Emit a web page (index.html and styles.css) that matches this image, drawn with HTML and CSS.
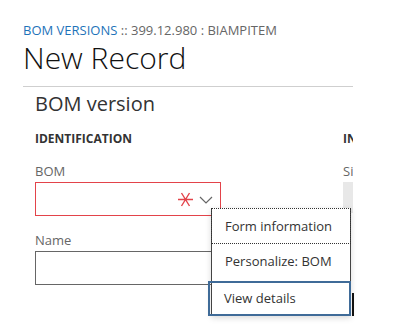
FILE: index.html
```html
<!DOCTYPE html>
<html lang="en">
<head>
  <meta charset="UTF-8">
  <meta name="viewport" content="width=device-width, initial-scale=1.0">
  <title>New Record</title>
  <link rel="stylesheet" href="styles.css">
</head>
<body>
  <div class="page">
    <div class="crumb"><span class="crumb-link">BOM VERSIONS</span> :: 399.12.980 : BIAMPITEM</div>
    <h1 class="title">New Record</h1>
    <hr>
    <div class="section">
      <h2 class="section-title">BOM version</h2>
      <div class="columns">
        <div class="group">
          <h3 class="group-title">Identification</h3>
          <label class="field-label">BOM</label>
          <div class="input required">
            <svg class="asterisk" width="17" height="15" viewBox="0 0 17 15">
              <path d="M1 7.5 H16 M4.5 1 L12.5 14 M12.5 1 L4.5 14" fill="none" stroke="#e3434a" stroke-width="1.4"/>
            </svg>
            <svg class="chevron" width="14" height="8" viewBox="0 0 14 8">
              <path d="M1 1 L7 7 L13 1" fill="none" stroke="#666" stroke-width="1.2"/>
            </svg>
          </div>
          <label class="field-label name-label">Name</label>
          <div class="input"></div>
        </div>
        <div class="group">
          <h3 class="group-title">Inventory</h3>
          <label class="field-label">Site</label>
          <div class="input disabled"></div>
        </div>
      </div>
    </div>
  </div>

  <div class="context-menu">
    <div class="menu-item focused">Form information</div>
    <div class="menu-item">Personalize: BOM</div>
    <div class="menu-item selected">View details</div>
  </div>
  <div class="edge-mark"></div>
</body>
</html>
```

FILE: styles.css
```css
body {
  margin: 0;
  padding: 0;
  font-family: "Open Sans", "Liberation Sans", sans-serif;
  background-color: white;
  color: #333;
}

.page {
  width: 330px;
  padding: 22px 0 0 23px;
  overflow: hidden;
}

.crumb {
  font-size: 13px;
  line-height: 17px;
  color: #666;
  white-space: nowrap;
}

.crumb-link {
  color: #1e73b9;
}

.title {
  margin: 2px 0 0 0;
  font-size: 30px;
  font-weight: 300;
  line-height: 33px;
  color: #111;
}

hr {
  margin: 12px 0 0 0;
  border: none;
  border-top: 1px solid #cfcfcf;
}

.section {
  padding-left: 12px;
}

.section-title {
  margin: 4px 0 0 0;
  font-size: 20px;
  font-weight: 400;
  line-height: 26px;
  color: #333;
}

.columns {
  display: grid;
  grid-template-columns: 296px 200px;
  gap: 12px;
  margin-top: 14px;
}

.group-title {
  margin: 0;
  font-size: 12px;
  font-weight: 700;
  line-height: 16px;
  text-transform: uppercase;
  color: #333;
  white-space: nowrap;
}

.field-label {
  display: block;
  margin-top: 15px;
  font-size: 13px;
  line-height: 18px;
  color: #666;
}

.name-label {
  margin-top: 15px;
}

.input {
  box-sizing: border-box;
  width: 186px;
  height: 34px;
  margin-top: 2px;
  border: 1px solid #666;
  display: flex;
  align-items: center;
  justify-content: flex-end;
  gap: 5px;
  padding-right: 7px;
}

.input.required {
  border-color: #e3434a;
}

.input.disabled {
  border: none;
  background-color: #e8e8e8;
  height: 31px;
}

.chevron {
  margin-top: 2px;
}

.context-menu {
  position: absolute;
  left: 211px;
  top: 208px;
  width: 140px;
  box-sizing: border-box;
  background-color: white;
  border-left: 1px solid #444;
  border-right: 1px solid #444;
  box-shadow: 0 2px 6px rgba(0, 0, 0, 0.15);
}

.menu-item {
  height: 36px;
  line-height: 34px;
  padding-left: 13px;
  font-size: 13px;
  color: #333;
  box-sizing: border-box;
}

.menu-item.focused {
  border: 1px dotted #333;
  margin: 0 -1px;
}

.menu-item.selected {
  border: 2px solid #3f6b98;
  margin: 1px -1px 0 -4px;
  padding-left: 14px;
  line-height: 30px;
  height: 35px;
}

.edge-mark {
  position: absolute;
  left: 352px;
  top: 293px;
  width: 2px;
  height: 23px;
  background-color: #111;
}
```
